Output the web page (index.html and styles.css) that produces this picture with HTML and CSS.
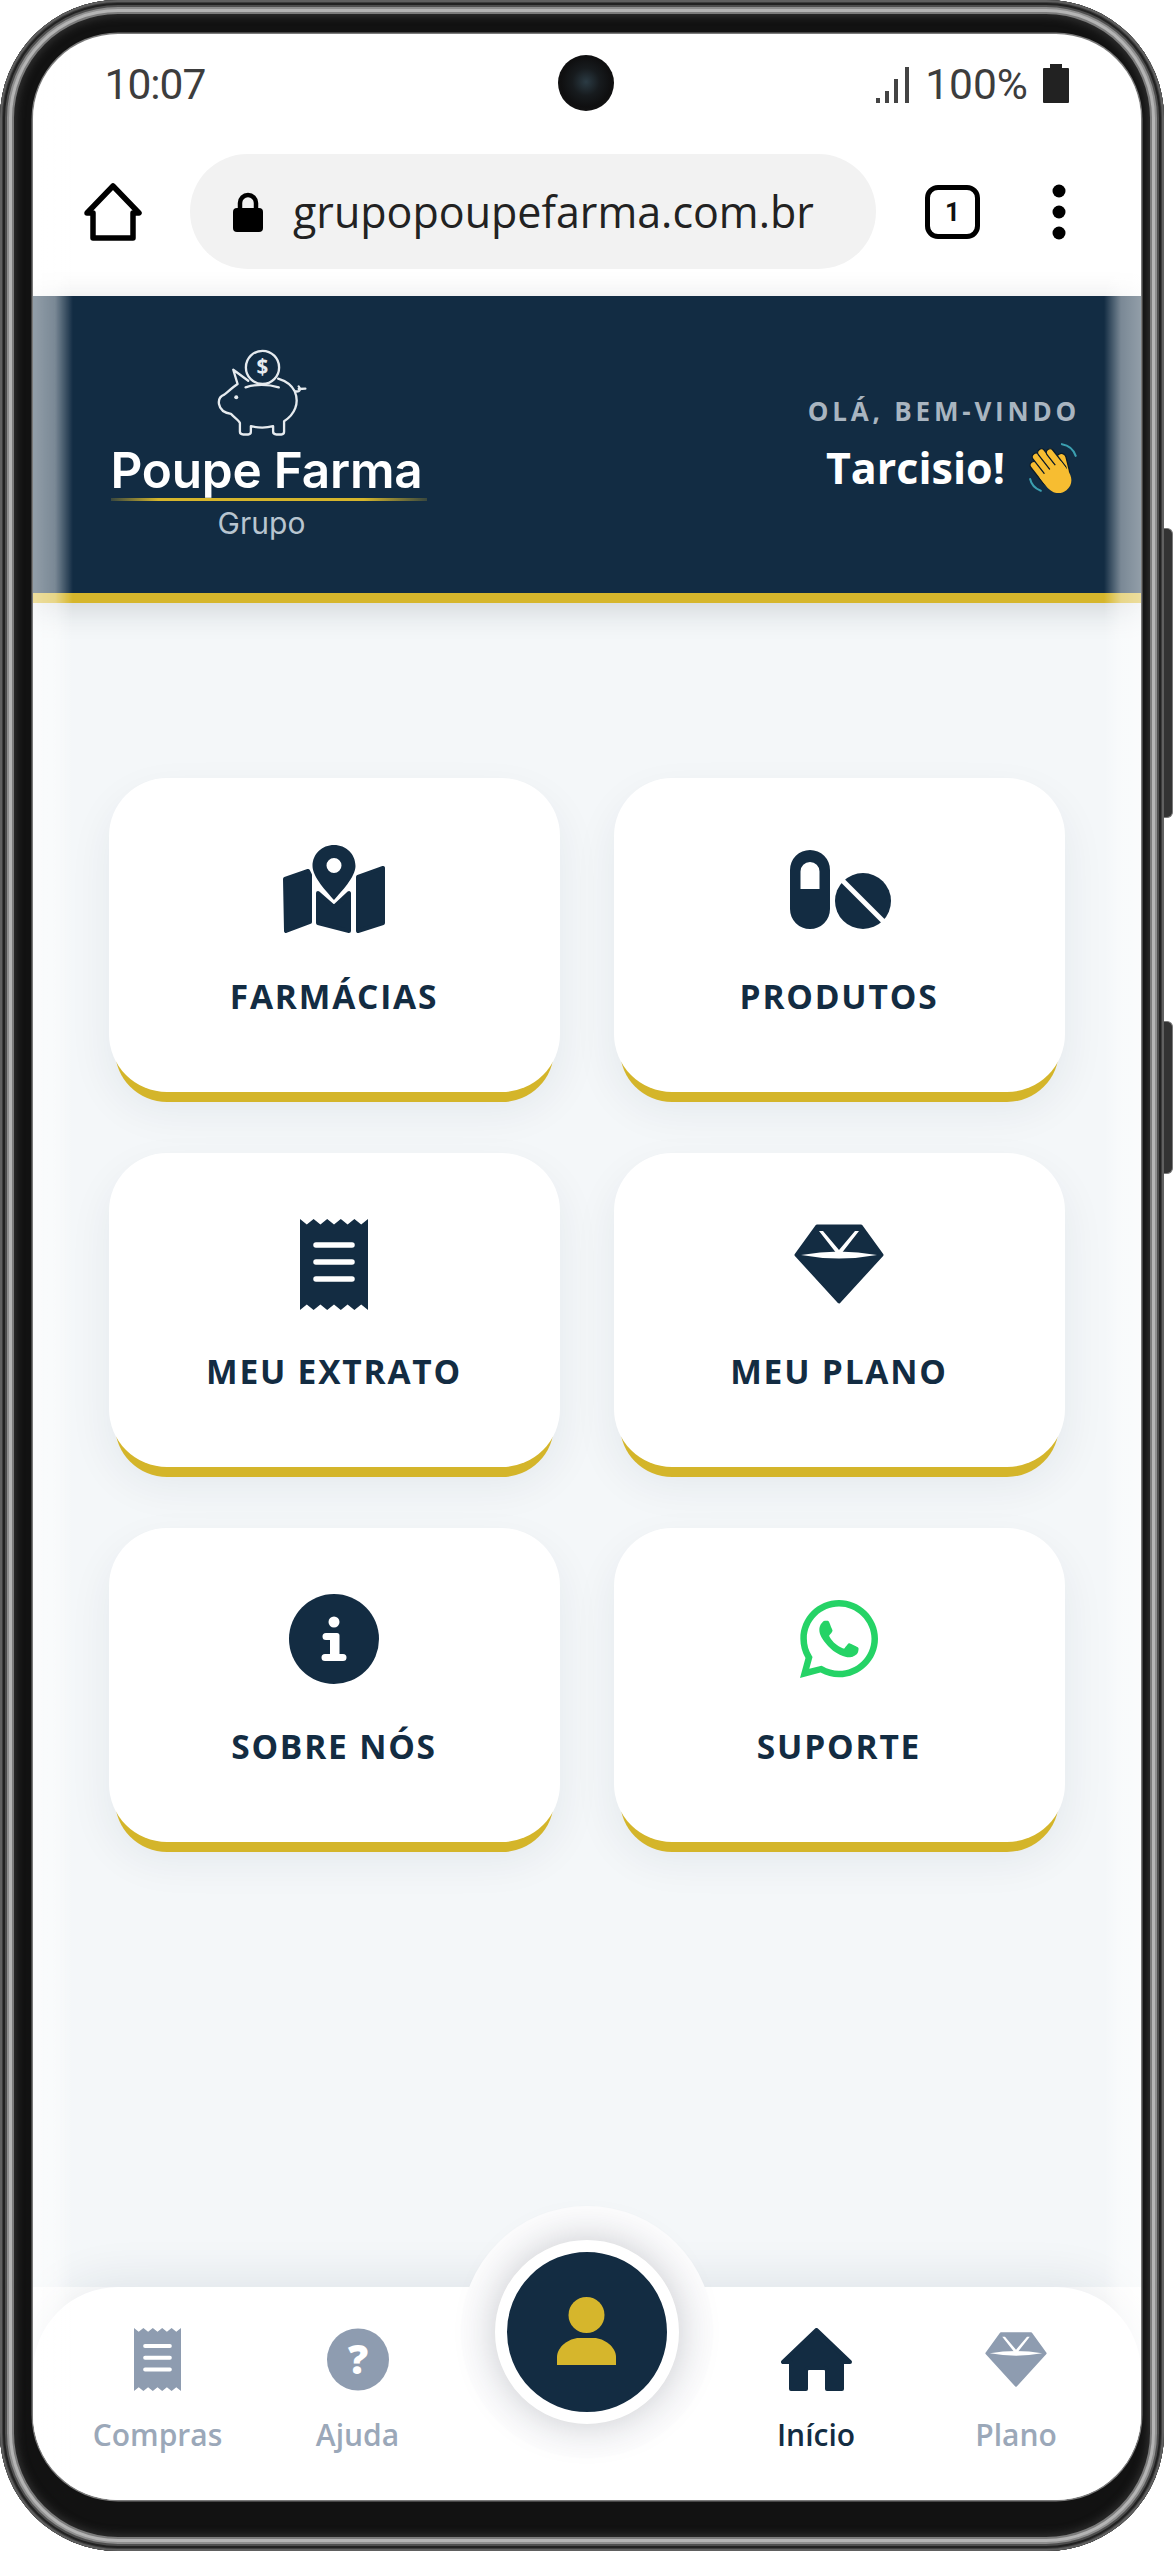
FILE: index.html
```html
<!DOCTYPE html>
<html lang="pt-BR">
<head>
<meta charset="utf-8">
<title>Grupo Poupe Farma</title>
<link rel="stylesheet" href="styles.css">
</head>
<body>
<svg class="defs" width="0" height="0" aria-hidden="true">
  <symbol id="i-receipt" viewBox="0 0 68 91">
    <path fill="currentColor" d="M0 0l6.800 5.500L13.600 0l6.800 5.500L27.200 0 34 5.500 40.800 0l6.800 5.500L54.400 0l6.800 5.500L68 0v91l-6.800-5.500L54.400 91l-6.800-5.500L40.800 91 34 85.500 27.200 91l-6.800-5.500L13.600 91l-6.800-5.500L0 91z"/>
    <path fill="none" stroke="#fff" stroke-width="5.500" stroke-linecap="round" d="M16 26h36M16 43h36M16 60h36"/>
  </symbol>
  <symbol id="i-gem" viewBox="0 0 90 80">
    <path fill="currentColor" stroke="currentColor" stroke-width="3" stroke-linejoin="round" d="M23 2h44l21 29-43 47L2 31z"/>
    <path fill="#fff" d="M7 31q38-7 76 0-38 7-76 0z"/>
    <path fill="#fff" d="M25 7h4l16 19 16-19h4L47 30h-4z"/>
  </symbol>
</svg>

<div class="phone">
  <div class="screen">
    <div class="status">
      <span class="clock">10:07</span>
      <div class="status-right">
        <svg class="signal" viewBox="0 0 33 36"><path fill="#444" d="M0 31h4v5H0zM9 24h4v12H9zM18 12h4v24h-4zM29 0h4v36h-4z"/></svg>
        <span class="percent">100%</span>
        <svg class="battery" viewBox="0 0 26 39"><path fill="#222" d="M7 0h12v4h6a1 1 0 0 1 1 1v33a1 1 0 0 1-1 1H1a1 1 0 0 1-1-1V5a1 1 0 0 1 1-1h6z"/></svg>
      </div>
      <div class="camera"></div>
    </div>

    <div class="toolbar">
      <svg class="home-btn" viewBox="0 0 58 58"><path fill="none" stroke="#000" stroke-width="5.500" stroke-linejoin="round" d="M3 30 29 3l26 27h-6v25H9V30z"/></svg>
      <div class="omnibox">
        <svg class="lock" viewBox="0 0 30 40"><path fill="none" stroke="#000" stroke-width="4.500" d="M7 19V11a8 8 0 0 1 16 0v8"/><rect y="16" width="30" height="24" rx="4"/></svg>
        <span class="url">grupopoupefarma.com.br</span>
      </div>
      <div class="tabs">1</div>
      <svg class="kebab" viewBox="0 0 14 56"><circle cx="7" cy="7" r="6.500"/><circle cx="7" cy="28" r="6.500"/><circle cx="7" cy="49" r="6.500"/></svg>
    </div>

    <header class="hero">
      <div class="logo">
        <svg class="pig" viewBox="370 60 280 270">
          <g fill="none" stroke="#e6ebef" stroke-width="7" stroke-linecap="round" stroke-linejoin="round">
            <circle cx="513" cy="118" r="50"/>
            <path d="M470 158 425 125l13 43c-18 12-33 27-40 32-13 5-18 15-16 28 3 17 18 27 36 30 12 12 24 20 27 27v27q0 8 10 8h15q8 0 8-8v-17c22 5 47 5 67 0v17q0 8 10 8h15q8 0 8-8v-32c32-20 47-55 32-90-10-20-30-32-50-38"/>
            <path d="M462 178c28-10 68-10 100 0M612 190c13 2 18-5 10-15M622 183l20-1"/>
          </g>
          <circle cx="434" cy="208" r="6" fill="#e6ebef"/>
          <text x="513" y="139" class="pig-coin">$</text>
        </svg>
        <div class="brand">Poupe Farma</div>
        <div class="brand-rule"></div>
        <div class="brand-sub">Grupo</div>
      </div>
      <div class="greeting">
        <div class="hello">OLÁ, BEM-VINDO</div>
        <div class="user">
          <span>Tarcisio!</span>
          <svg class="wave" viewBox="0 0 51 51">
            <g fill="none" stroke="#3b9fb0" stroke-width="2" stroke-linecap="round">
              <path d="M33 3c6 1 11 5 13 11M3 36c1 5 5 9 10 11"/>
            </g>
            <g transform="rotate(-38 26 26)" fill="#f7bd31" stroke="#0a1a28" stroke-width="1.200">
              <rect x="30" y="17" width="9" height="22" rx="4.500" transform="rotate(24 34 28)"/>
              <rect x="9" y="8" width="7" height="26" rx="3.500"/>
              <rect x="15.500" y="3" width="7" height="30" rx="3.500"/>
              <rect x="22" y="3" width="7" height="30" rx="3.500"/>
              <rect x="28.500" y="8" width="7" height="26" rx="3.500"/>
              <path stroke="none" d="M9.600 24h25.300v10c0 9-5 15-12.600 15-8 0-12.700-6-12.700-15z"/>
            </g>
          </svg>
        </div>
      </div>
    </header>

    <main class="menu">
      <a class="tile">
        <div class="tile-icon">
          <svg width="102" height="88" viewBox="0 0 102 88"><path class="ink" fill-rule="evenodd" d="M51 0C39 0 29.500 9 29.500 21 29.500 32 44 47 51 55c7-8 21.500-23 21.500-34C72.500 9 63 0 51 0zm0 13a7.500 7.500 0 1 1 0 15 7.500 7.500 0 0 1 0-15z"/><path class="ink ink-round" d="M2 34l23-8 2 4v47L3 86zM35 48l16 14 15-14v38l-31-8zM75 32l25-9v55L75 86z"/></svg>
        </div>
        <span class="tile-label">FARMÁCIAS</span>
      </a>
      <a class="tile">
        <div class="tile-icon icon-nudge">
          <svg width="102" height="79" viewBox="0 0 102 79"><path class="ink" fill-rule="evenodd" d="M20 0a20 20 0 0 1 20 20v39a20 20 0 0 1-40 0V20A20 20 0 0 1 20 0zm0 12a9.500 9.500 0 0 0-9.500 9.500V39h19V21.500A9.500 9.500 0 0 0 20 12z"/><circle class="ink" cx="73" cy="51" r="28"/><path stroke="#fff" stroke-width="5" d="M50 28l46 46"/></svg>
        </div>
        <span class="tile-label">PRODUTOS</span>
      </a>
      <a class="tile">
        <div class="tile-icon"><svg class="tint-ink" width="68" height="91"><use href="#i-receipt"/></svg></div>
        <span class="tile-label">MEU EXTRATO</span>
      </a>
      <a class="tile">
        <div class="tile-icon"><svg class="tint-ink" width="90" height="80"><use href="#i-gem"/></svg></div>
        <span class="tile-label">MEU PLANO</span>
      </a>
      <a class="tile">
        <div class="tile-icon">
          <svg width="90" height="90" viewBox="0 0 90 90"><circle class="ink" cx="45" cy="45" r="45"/><circle cx="45" cy="28" r="5.500" fill="#fff"/><path fill="#fff" d="M37 39h11a2.500 2.500 0 0 1 2.500 2.500V60H54a3.500 3.500 0 0 1 0 7H36a3.500 3.500 0 0 1 0-7h5V46h-4a3.500 3.500 0 0 1 0-7z"/></svg>
        </div>
        <span class="tile-label">SOBRE NÓS</span>
      </a>
      <a class="tile">
        <div class="tile-icon">
          <svg width="80" height="78" viewBox="0 32 448 448"><path fill="#25d366" d="M380.900 97.100C339 55.100 283.200 32 223.900 32c-122.400 0-222 99.600-222 222 0 39.100 10.200 77.300 29.600 111L0 480l117.700-30.900c32.400 17.700 68.900 27 106.100 27h.1c122.300 0 224.100-99.600 224.100-222 0-59.300-25.200-115-67.100-157zm-157 341.600c-33.200 0-65.700-8.900-94-25.700l-6.700-4-69.800 18.300L72 359.200l-4.400-7c-18.500-29.400-28.200-63.300-28.200-98.200 0-101.700 82.800-184.500 184.600-184.500 49.300 0 95.600 19.200 130.400 54.100 34.800 34.900 56.200 81.200 56.100 130.500 0 101.800-84.900 184.600-186.600 184.600zm101.200-138.200c-5.500-2.800-32.800-16.200-37.900-18-5.100-1.900-8.800-2.800-12.500 2.800-3.700 5.600-14.300 18-17.600 21.800-3.200 3.700-6.500 4.200-12 1.400-32.600-16.300-54-29.100-75.500-66-5.700-9.800 5.700-9.100 16.300-30.300 1.800-3.700.9-6.900-.5-9.700-1.400-2.800-12.500-30.100-17.100-41.200-4.500-10.800-9.100-9.300-12.500-9.500-3.200-.2-6.900-.2-10.600-.2-3.700 0-9.700 1.400-14.800 6.900-5.100 5.600-19.400 19-19.400 46.300 0 27.300 19.900 53.700 22.600 57.400 2.800 3.700 39.100 59.700 94.800 83.800 35.200 15.200 49 16.500 66.600 13.900 10.700-1.600 32.800-13.400 37.400-26.400 4.600-13 4.600-24.100 3.200-26.400-1.300-2.500-5-3.900-10.500-6.600z"/></svg>
        </div>
        <span class="tile-label">SUPORTE</span>
      </a>
    </main>

    <nav class="tabbar">
      <a class="tab">
        <svg class="tab-icon" width="47" height="63"><use href="#i-receipt"/></svg>
        <span>Compras</span>
      </a>
      <a class="tab">
        <svg class="tab-icon" width="62" height="62" viewBox="0 0 62 62"><circle cx="31" cy="31" r="31" fill="currentColor"/><text x="31" y="45" class="help-mark">?</text></svg>
        <span>Ajuda</span>
      </a>
      <div class="tab-spacer"></div>
      <a class="tab tab-active">
        <svg class="tab-icon" width="71" height="63" viewBox="0 0 71 63"><path fill="currentColor" stroke="currentColor" stroke-width="4" stroke-linejoin="round" d="M35.500 2 2 34h8v27h15V43a3 3 0 0 1 3-3h15a3 3 0 0 1 3 3v18h15V34h8z"/></svg>
        <span>Início</span>
      </a>
      <a class="tab">
        <svg class="tab-icon" width="62" height="56"><use href="#i-gem"/></svg>
        <span>Plano</span>
      </a>
      <div class="halo"></div>
      <a class="profile">
        <svg class="profile-glyph" width="59" height="68" viewBox="0 0 59 68"><circle cx="29.500" cy="18" r="18"/><path d="M0 68v-8c0-10 12-19 22-19h15c10 0 22 9 22 19v8z"/></svg>
      </a>
    </nav>
    <div class="edge-glow"></div>
  </div>
  <div class="key key-power"></div>
  <div class="key key-volume"></div>
</div>
</body>
</html>
```
FILE: styles.css
```css
* { box-sizing: border-box; }

html, body { margin: 0; background: #fff; }

.defs { position: absolute; }

/* Device body: the metal rim is a stack of inset rings */
.phone {
  position: relative;
  width: 1164px;
  height: 2551px;
  padding: 34px 23px 51px 32.5px;
  border-radius: 118px;
  background: #121212;
  box-shadow:
    inset 0 0 0 2px #606060,
    inset 0 0 0 3px #3e3e3e,
    inset 0 0 0 5px #222,
    inset 0 0 0 7px #4e4e4e,
    inset 0 0 0 9px #8e8e8e,
    inset 0 0 0 12px #b4b4b4,
    inset 0 0 0 14px #7c7c7c,
    inset 0 0 8px 16px #333;
}

.screen {
  position: relative;
  display: flex;
  flex-direction: column;
  height: 100%;
  overflow: hidden;
  border-radius: 85px;
  background: #fff;
  box-shadow: 0 0 0 1.5px #7a7a7a;
  font-family: "Open Sans", sans-serif;
}

.edge-glow {
  position: absolute;
  inset: 0;
  pointer-events: none;
  z-index: 5;
  background:
    linear-gradient(90deg, rgba(255,255,255,.54) 0, rgba(255,255,255,.44) 22px, rgba(255,255,255,0) 40px),
    linear-gradient(270deg, rgba(255,255,255,.54) 0, rgba(255,255,255,.44) 20px, rgba(255,255,255,0) 37px);
}

/* Android status bar */
.status {
  position: relative;
  flex: none;
  height: 120px;
  padding: 29px 72px 0 72px;
  display: flex;
  justify-content: space-between;
  align-items: flex-start;
  font-family: Roboto, sans-serif;
  font-size: 42.5px;
  line-height: 44px;
  color: #3d3d3d;
}

.clock { letter-spacing: -1px; }
.status-right { display: flex; align-items: center; }
.signal { width: 33px; height: 36px; }
.percent { margin: 0 15px 0 16px; }
.battery { width: 26px; height: 39px; margin-top: -3px; }

.camera {
  position: absolute;
  left: 525px;
  top: 21px;
  width: 56px;
  height: 56px;
  border-radius: 50%;
  background: radial-gradient(circle at 50% 48%, #2b3b44 0, #171b1e 34%, #0f0f10 62%, #1a1a1a 100%);
}

/* Browser toolbar */
.toolbar {
  flex: none;
  height: 142px;
  padding: 0 0 27px 51.5px;
  display: flex;
  align-items: center;
  background: #fff;
}

.home-btn { flex: none; width: 58px; height: 58px; }

.omnibox {
  flex: none;
  width: 686px;
  height: 115px;
  margin-left: 48px;
  padding-left: 43px;
  display: flex;
  align-items: center;
  gap: 30px;
  border-radius: 58px;
  background: #f2f2f2;
}

.lock { flex: none; width: 30px; height: 40px; }

.url {
  font-family: "Open Sans", sans-serif;
  font-size: 43px;
  line-height: 46px;
  color: #222;
  white-space: nowrap;
}

.tabs {
  flex: none;
  width: 55px;
  height: 54px;
  margin-left: 49px;
  border: 5px solid #000;
  border-radius: 13px;
  display: flex;
  align-items: center;
  justify-content: center;
  font-family: Roboto, sans-serif;
  font-weight: 700;
  font-size: 26px;
  color: #111;
}

.kebab { flex: none; width: 14px; height: 56px; margin-left: 72px; }

/* Site header */
.hero {
  position: relative;
  z-index: 2;
  flex: none;
  height: 307px;
  padding: 0 64px 10px 78px;
  display: flex;
  justify-content: space-between;
  align-items: center;
  background: #122c43;
  border-bottom: 10px solid #d6b62c;
  box-shadow: 0 6px 30px rgba(20, 30, 40, .16);
}

.logo {
  width: 316px;
  padding-top: 10px;
  display: flex;
  flex-direction: column;
  align-items: center;
}

.pig { width: 93px; height: 90px; margin-left: -15px; }
.pig-coin {
  fill: #e6ebef;
  font-family: "Open Sans", sans-serif;
  font-weight: 700;
  font-size: 62px;
  text-anchor: middle;
}

.brand {
  margin: 4px 0 0 -4px;
  font-family: Inter, sans-serif;
  font-weight: 600;
  font-size: 49.5px;
  line-height: 56px;
  letter-spacing: -.2px;
  color: #fff;
  white-space: nowrap;
}

.brand-rule {
  width: 100%;
  height: 3px;
  background: linear-gradient(90deg, rgba(214,182,44,.2), #d6b62c 15%, #d6b62c 80%, rgba(214,182,44,.2));
}

.brand-sub {
  margin: 4px 0 0 -14px;
  font-family: Inter, sans-serif;
  font-size: 30px;
  line-height: 36px;
  color: #b8c5d0;
}

.greeting { padding-top: 8px; text-align: right; }

.hello {
  font-weight: 700;
  font-size: 26px;
  line-height: 34px;
  letter-spacing: 3.8px;
  margin-right: -3px;
  color: #a9b5c0;
}

.user {
  margin-top: 14px;
  display: flex;
  justify-content: flex-end;
  align-items: center;
  gap: 23px;
  font-weight: 700;
  font-size: 43px;
  line-height: 52px;
  color: #fff;
}

.wave { width: 54px; height: 54px; margin: -2px -4px -2px -1px; }

/* Shortcut tiles */
.menu {
  flex: 1;
  min-height: 0;
  padding: 175px 76.5px 0 76px;
  display: grid;
  grid-template-columns: 451px 451px;
  grid-auto-rows: 314px;
  column-gap: 54px;
  row-gap: 61px;
  align-content: start;
  background: #f4f7f9;
}

.tile {
  padding-top: 59px;
  display: flex;
  flex-direction: column;
  align-items: center;
  border-radius: 58px;
  background: #fff;
  box-shadow:
    0 16px 0 -6px #d4b52a,
    0 18px 44px rgba(19, 44, 66, .07);
}

.tile-icon {
  height: 104px;
  display: flex;
  align-items: center;
  justify-content: center;
}

.icon-nudge { padding-left: 3px; }

.tint-ink { color: #132c42; }
.ink { fill: #132c42; }
.ink-round { stroke: #132c42; stroke-width: 4; stroke-linejoin: round; }

.tile-label {
  margin-top: 33px;
  font-weight: 700;
  font-size: 33.5px;
  line-height: 45px;
  letter-spacing: 1.8px;
  color: #132c42;
}

/* Bottom navigation */
.tabbar {
  position: relative;
  z-index: 3;
  flex: none;
  height: 213px;
  padding: 41px 25px 0;
  display: grid;
  grid-template-columns: 200px 200px 1fr 200px 200px;
  align-items: start;
  border-radius: 85px 85px 0 0;
  background: #fff;
  box-shadow: 0 -10px 44px rgba(19, 44, 66, .08);
}

.tab {
  position: relative;
  z-index: 1;
  display: flex;
  flex-direction: column;
  align-items: center;
  font-weight: 600;
  font-size: 30px;
  line-height: 40px;
  color: #9ba8b9;
}

.tab-icon { height: 63px; color: #8e9cb0; }
.tab span { margin-top: 24px; }
.tab-active { color: #132c42; }
.tab-active .tab-icon { color: #132c42; }

.help-mark {
  fill: #fff;
  font-family: "Open Sans", sans-serif;
  font-weight: 800;
  font-size: 40px;
  text-anchor: middle;
}

.halo {
  position: absolute;
  left: 50%;
  top: -81px;
  width: 252px;
  height: 252px;
  margin-left: -126px;
  border-radius: 50%;
  background: #fdfdfe;
}

.profile {
  position: absolute;
  left: 50%;
  top: -47px;
  width: 184px;
  height: 184px;
  margin-left: -92px;
  display: flex;
  align-items: center;
  justify-content: center;
  border: 12px solid #fff;
  border-radius: 50%;
  background: #132c42;
  fill: #d6b62c;
  box-shadow: 0 0 42px rgba(19, 30, 44, .24);
}

.profile-glyph { margin-bottom: 3px; }

/* Hardware keys on the right rim */
.key {
  position: absolute;
  left: 1164px;
  width: 9px;
  border: 1.5px solid #7a7a7a;
  border-left: 0;
  border-radius: 0 6px 6px 0;
  background: #333;
}
.key-power { top: 528px; height: 290px; }
.key-volume { top: 1021px; height: 153px; }
```
